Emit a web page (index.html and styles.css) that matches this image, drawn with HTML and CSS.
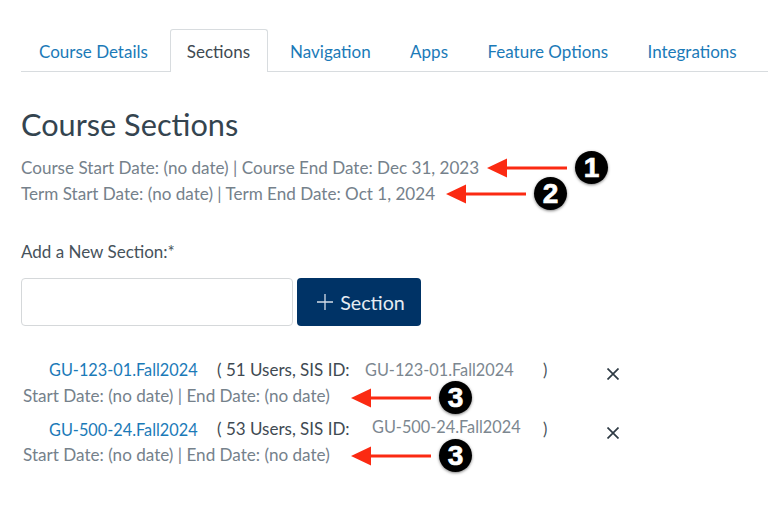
FILE: index.html
```html
<!DOCTYPE html>
<html lang="en">
<head>
    <meta charset="UTF-8">
    <title>Course Sections</title>
    <link rel="stylesheet" href="styles.css">
</head>
<body>
    <div id="page">
        <ul class="tabs">
            <li><a href="#">Course Details</a></li>
            <li class="active"><a href="#">Sections</a></li>
            <li><a href="#">Navigation</a></li>
            <li><a href="#">Apps</a></li>
            <li><a href="#">Feature Options</a></li>
            <li><a href="#">Integrations</a></li>
        </ul>

        <h1>Course Sections</h1>
        <p class="dates">Course Start Date: (no date) | Course End Date: Dec 31, 2023</p>
        <p class="dates">Term Start Date: (no date) | Term End Date: Oct 1, 2024</p>

        <label class="add-label" for="sectionName">Add a New Section:*</label>
        <div class="add-row">
            <input type="text" id="sectionName">
            <button>
                <svg class="plus" viewBox="0 0 16 16"><path d="M8 0V16M0 8H16"/></svg>
                Section
            </button>
        </div>

        <div class="sections">
            <div class="section">
                <a class="section-name" href="#">GU-123-01.Fall2024</a>
                <span class="section-users">( 51 Users, SIS ID:</span>
                <span class="sis">GU-123-01.Fall2024</span>
                <span class="paren">)</span>
                <svg class="remove" viewBox="0 0 12 12"><path d="M0.500 0.500 11.500 11.500M11.500 0.500 0.500 11.500"/></svg>
                <div class="section-dates">Start Date: (no date) | End Date: (no date)</div>
            </div>
            <div class="section">
                <a class="section-name" href="#">GU-500-24.Fall2024</a>
                <span class="section-users">( 53 Users, SIS ID:</span>
                <span class="sis sis-shift">GU-500-24.Fall2024</span>
                <span class="paren">)</span>
                <svg class="remove" viewBox="0 0 12 12"><path d="M0.500 0.500 11.500 11.500M11.500 0.500 0.500 11.500"/></svg>
                <div class="section-dates">Start Date: (no date) | End Date: (no date)</div>
            </div>
        </div>
    </div>

    <!-- red arrows drawn on top of the screenshot -->
    <div class="callout c1">
        <svg class="arrow" viewBox="0 0 80 20"><path d="M0 10 20 0.500V8.500H80V11.500H20V19.500Z"/></svg>
        <span class="badge">1</span>
    </div>
    <div class="callout c2">
        <svg class="arrow" viewBox="0 0 80 20"><path d="M0 10 20 0.500V8.500H80V11.500H20V19.500Z"/></svg>
        <span class="badge">2</span>
    </div>
    <div class="callout c3">
        <svg class="arrow" viewBox="0 0 80 20"><path d="M0 10 20 0.500V8.500H80V11.500H20V19.500Z"/></svg>
        <span class="badge">3</span>
    </div>
    <div class="callout c4">
        <svg class="arrow" viewBox="0 0 80 20"><path d="M0 10 20 0.500V8.500H80V11.500H20V19.500Z"/></svg>
        <span class="badge">3</span>
    </div>
</body>
</html>
```

FILE: styles.css
```css
body {
    font-family: Lato, 'Open Sans', sans-serif;
    background: #fff;
    color: #2d3b45;
    margin: 0;
    overflow: hidden;
}
a {
    color: #1b7ab8;
    text-decoration: none;
}
#page {
    padding: 29px 0 0 21px;
    width: 747px;
    height: 497px;
}
.tabs {
    display: flex;
    list-style: none;
    margin: 0;
    padding: 0;
    height: 42px;
    border-bottom: 1px solid #d8dcdf;
}
.tabs li {
    height: 42px;
    box-sizing: border-box;
    padding: 13px 19.700px 0;
    font-size: 17px;
    line-height: 20px;
    white-space: nowrap;
}
.tabs li:first-child {
    padding: 13px 22px 0 18px;
}
.tabs li.active {
    height: 43px;
    padding: 12px 17px 0 16px;
    background: #fff;
    border: 1px solid #d8dcdf;
    border-bottom: none;
    border-radius: 3px 3px 0 0;
}
.tabs li.active a {
    color: #3f4a52;
}
.tabs li.active + li {
    padding-left: 22px;
}
h1 {
    font-size: 30.700px;
    font-weight: 400;
    line-height: 36px;
    margin: 35px 0 12px;
    color: #34444f;
}
.dates {
    font-size: 17.080px;
    line-height: 26px;
    margin: 0;
    color: #75818b;
}
.add-label {
    display: block;
    margin-top: 35px;
    font-size: 17px;
    line-height: 20px;
    color: #46525b;
}
.add-row {
    display: flex;
    gap: 4px;
    margin-top: 16px;
}
.add-row input {
    width: 272px;
    height: 48px;
    box-sizing: border-box;
    border: 1px solid #d5d8da;
    border-radius: 4px;
    outline: none;
}
.add-row button {
    display: flex;
    align-items: center;
    justify-content: center;
    gap: 7px;
    width: 124px;
    height: 48px;
    border: none;
    border-radius: 4px;
    background: #003366;
    color: #e6ecf2;
    font-family: inherit;
    font-size: 19.700px;
    padding: 0 0 0 4px;
}
.plus {
    width: 16px;
    height: 16px;
    fill: none;
    stroke: #d5dee8;
    stroke-width: 1.300;
}
.sections {
    margin-top: 30px;
}
.section {
    display: grid;
    grid-template-columns: 168px 148px 178px 64px 12px;
    grid-template-rows: 27px 32px;
    align-items: center;
    margin-left: 28px;
    font-size: 16.300px;
    line-height: 20px;
}
.section + .section .section-name {
    padding-top: 2px;
}
.section-users {
    color: #3f4a52;
    font-size: 17px;
    white-space: nowrap;
}
.sis {
    color: #7c8790;
    white-space: nowrap;
}
.sis-shift {
    padding: 0 0 4px 7px;
}
.paren {
    color: #46525b;
}
.remove {
    width: 12px;
    height: 12px;
    margin-top: 8px;
    fill: none;
    stroke: #2f3b45;
    stroke-width: 1.700;
}
.section-dates {
    grid-column: 1 / -1;
    align-self: start;
    margin: 3px 0 0 -26px;
    font-size: 17.100px;
    color: #75818b;
}
.callout {
    position: absolute;
    display: flex;
    align-items: center;
}
.arrow {
    width: 80px;
    height: 20px;
    fill: #fb2a12;
}
.badge {
    width: 33px;
    height: 33px;
    margin-left: 8px;
    border-radius: 50%;
    background: #000;
    color: #fff;
    font-family: 'Liberation Sans', sans-serif;
    font-weight: 700;
    font-size: 28px;
    line-height: 33px;
    text-align: center;
    -webkit-text-stroke: 0.7px #fff;
    box-shadow: 0 1px 3px rgba(0, 0, 0, 0.5);
}
.c1 { left: 487px; top: 151px; }
.c2 { left: 446px; top: 177px; }
.c3 { left: 351px; top: 381px; }
.c4 { left: 351px; top: 439px; }
```
